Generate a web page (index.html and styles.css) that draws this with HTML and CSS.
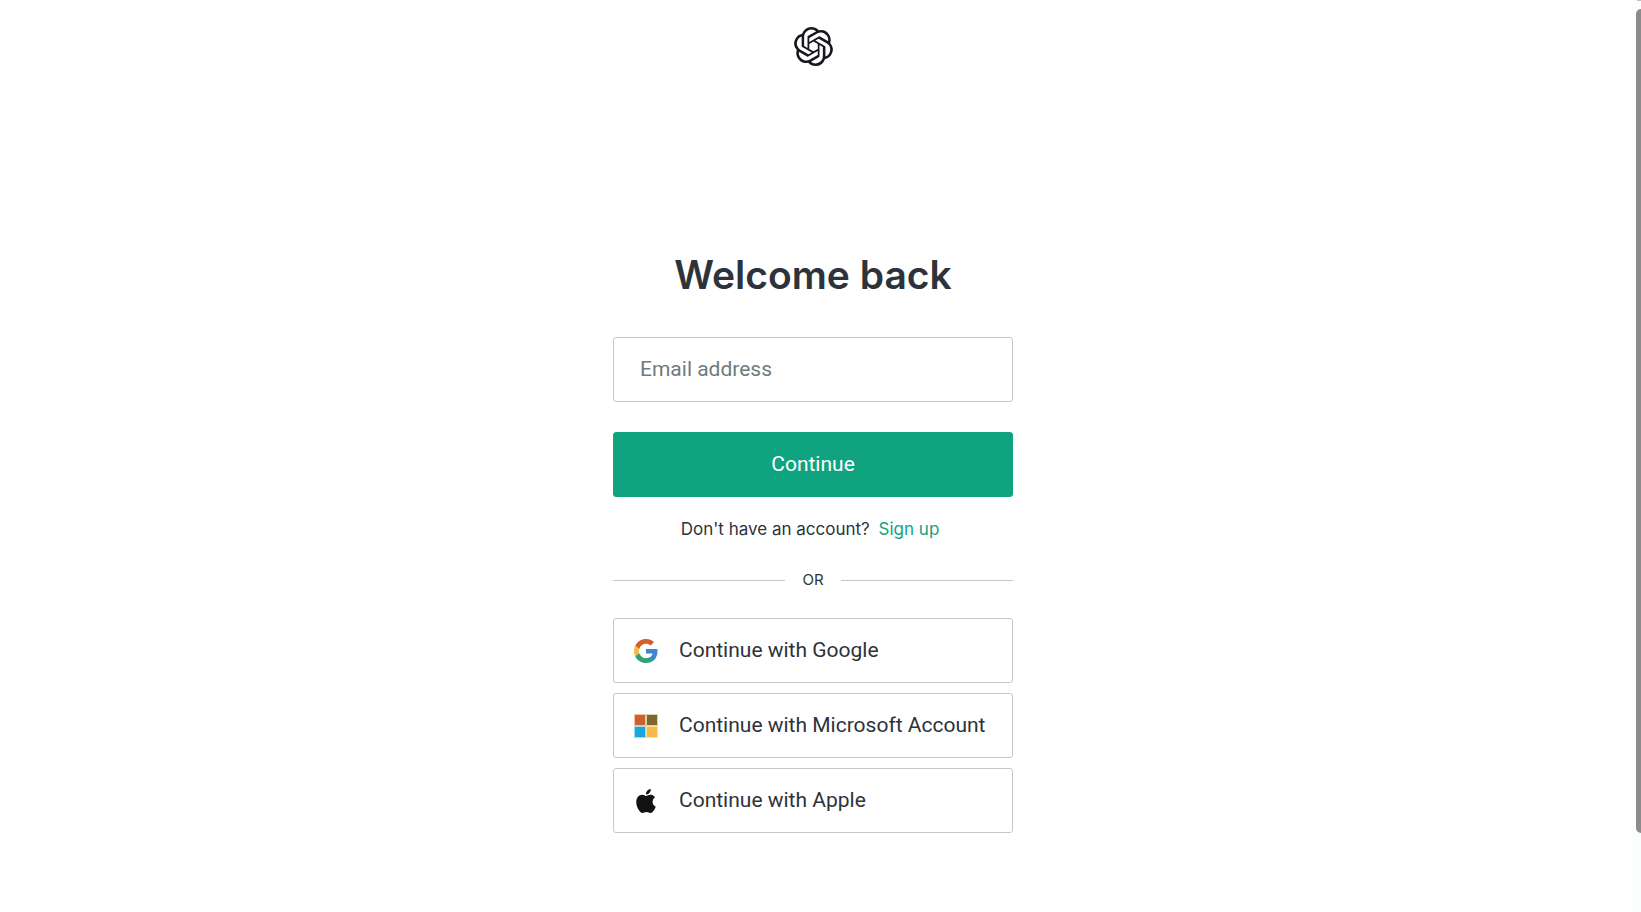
FILE: index.html
```html
<!DOCTYPE html>
<html lang="en">
<head>
<meta charset="utf-8">
<meta name="viewport" content="width=device-width, initial-scale=1">
<title>Welcome back</title>
<link rel="stylesheet" href="styles.css">
</head>
<body>
<div class="page">
  <header class="header">
    <svg class="logo" viewBox="0 0 24 24" role="img" aria-label="OpenAI"><path fill="currentColor" d="M22.2819 9.8211a5.9847 5.9847 0 0 0-.5157-4.9108 6.0462 6.0462 0 0 0-6.5098-2.9A6.0651 6.0651 0 0 0 4.9807 4.1818a5.9847 5.9847 0 0 0-3.9977 2.9 6.0462 6.0462 0 0 0 .7427 7.0966 5.98 5.98 0 0 0 .511 4.9107 6.051 6.051 0 0 0 6.5146 2.9001A5.9847 5.9847 0 0 0 13.2599 24a6.0557 6.0557 0 0 0 5.7718-4.2058 5.9894 5.9894 0 0 0 3.9977-2.9001 6.0557 6.0557 0 0 0-.7475-7.0729zm-9.022 12.6081a4.4755 4.4755 0 0 1-2.8764-1.0408l.1419-.0804 4.7783-2.7582a.7948.7948 0 0 0 .3927-.6813v-6.7369l2.02 1.1686a.071.071 0 0 1 .038.052v5.5826a4.504 4.504 0 0 1-4.4945 4.4944zm-9.6607-4.1254a4.4708 4.4708 0 0 1-.5346-3.0137l.142.0852 4.783 2.7582a.7712.7712 0 0 0 .7806 0l5.8428-3.3685v2.3324a.0804.0804 0 0 1-.0332.0615L9.74 19.9502a4.4992 4.4992 0 0 1-6.1408-1.6464zM2.3408 7.8956a4.485 4.485 0 0 1 2.3655-1.9728V11.6a.7664.7664 0 0 0 .3879.6765l5.8144 3.3543-2.0201 1.1685a.0757.0757 0 0 1-.071 0l-4.8303-2.7865A4.504 4.504 0 0 1 2.3408 7.8956zm16.5963 3.8558L13.1038 8.364 15.1192 7.2a.0757.0757 0 0 1 .071 0l4.8303 2.7913a4.4944 4.4944 0 0 1-.6765 8.1042v-5.6772a.79.79 0 0 0-.407-.667zm2.0107-3.0231l-.142-.0852-4.7735-2.7818a.7759.7759 0 0 0-.7854 0L9.409 9.2297V6.8974a.0662.0662 0 0 1 .0284-.0615l4.8303-2.7866a4.4992 4.4992 0 0 1 6.6802 4.66zM8.3065 12.863l-2.02-1.1638a.0804.0804 0 0 1-.038-.0567V6.0742a4.4992 4.4992 0 0 1 7.3757-3.4537l-.142.0805L8.704 5.459a.7948.7948 0 0 0-.3927.6813zm1.0976-2.3654l2.602-1.4998 2.6069 1.4998v2.9994l-2.5974 1.4997-2.6067-1.4997Z"/></svg>
  </header>
  <main class="panel">
    <h1 class="title">Welcome back</h1>
    <form class="form">
      <input class="field" type="email" name="email" aria-label="Email address" placeholder="Email address">
      <button class="submit" type="submit">Continue</button>
    </form>
    <p class="signup">Don't have an account? <a class="signup-link" href="#signup">Sign up</a></p>
    <div class="divider">OR</div>
    <div class="providers">
      <button class="provider" type="button">
        <svg class="icon" viewBox="0 0 24 24" aria-hidden="true"><path fill="#3f86d9" d="M23.5 12.3c0-.9-.1-1.6-.2-2.3H12v4.5h6.500c-.3 1.5-1.1 2.8-2.4 3.7v3h3.9c2.2-2.1 3.5-5.2 3.5-8.9z"/><path fill="#2ca478" d="M12 24c3.200 0 6-1.100 8-2.900l-3.900-3c-1.100.7-2.500 1.200-4.100 1.200-3.100 0-5.800-2.100-6.700-5H1.300v3.100C3.300 21.300 7.300 24 12 24z"/><path fill="#f6b94a" d="M5.300 14.300c-.3-.7-.4-1.500-.4-2.300s.2-1.600.4-2.300V6.600h-4C.5 8.200 0 10.100 0 12s.5 3.800 1.300 5.400l4-3.100z"/><path fill="#d0602e" d="M12 4.700c1.800 0 3.400.6 4.600 1.800L20 3.100C17.900 1.200 15.200 0 12 0 7.300 0 3.300 2.700 1.300 6.600l4 3.100c.9-2.900 3.600-5 6.700-5z"/></svg>
        <span>Continue with Google</span>
      </button>
      <button class="provider" type="button">
        <svg class="icon" viewBox="0 0 24 24" aria-hidden="true"><path fill="#f3c3a3" d="M0 0h12v12H0z"/><path fill="#d3d5ae" d="M12 0h12v12H12z"/><path fill="#a4dcec" d="M0 12h12v12H0z"/><path fill="#fce0a4" d="M12 12h12v12H12z"/><path fill="#d0602e" d="M1 1h10v10H1z"/><path fill="#80652f" d="M13 1h10v10H13z"/><path fill="#1ca6df" d="M1 13h10v10H1z"/><path fill="#f7b94a" d="M13 13h10v10H13z"/></svg>
        <span>Continue with Microsoft Account</span>
      </button>
      <button class="provider" type="button">
        <svg class="icon" viewBox="0 0 24 24" aria-hidden="true"><path fill="#101214" d="M12.152 6.896c-.948 0-2.415-1.078-3.960-1.040-2.040.027-3.910 1.183-4.961 3.014-2.117 3.675-.546 9.103 1.519 12.090 1.013 1.454 2.208 3.090 3.792 3.039 1.520-.065 2.090-.987 3.935-.987 1.831 0 2.350.987 3.960.948 1.637-.026 2.676-1.480 3.676-2.948 1.156-1.688 1.636-3.325 1.662-3.415-.039-.013-3.182-1.221-3.220-4.857-.026-3.040 2.480-4.494 2.597-4.559-1.429-2.090-3.623-2.324-4.390-2.376-2-.156-3.675 1.090-4.610 1.090zM15.530 3.830c.843-1.012 1.400-2.427 1.245-3.830-1.207.052-2.662.805-3.532 1.818-.780.896-1.454 2.338-1.273 3.714 1.338.104 2.715-.688 3.559-1.701"/></svg>
        <span>Continue with Apple</span>
      </button>
    </div>
  </main>
</div>
<div class="rail" aria-hidden="true"><div class="rail-cap"></div><div class="rail-thumb"></div></div>
</body>
</html>
```
FILE: styles.css
```css
* {
  box-sizing: border-box;
}

body {
  margin: 0;
  min-height: 100vh;
  display: flex;
  background: #fff;
  color: #2d333a;
  font-family: Roboto, "Liberation Sans", sans-serif;
}

.page {
  flex: 1;
  display: flex;
  flex-direction: column;
  align-items: center;
  padding: 27px 0 72px;
}

.logo {
  display: block;
  width: 39px;
  height: 39px;
  color: #16181d;
}

.panel {
  width: 100%;
  max-width: 400px;
  margin-top: 181px;
}

.title,
.signup,
.divider {
  font-family: Inter, "Liberation Sans", sans-serif;
}

.title {
  margin: 0 0 34px;
  font-size: 39px;
  line-height: 56px;
  font-weight: 600;
  text-align: center;
}

.form {
  display: flex;
  flex-direction: column;
  gap: 30px;
}

.field,
.submit,
.provider {
  width: 100%;
  height: 65px;
  border: 1px solid #c2c8d0;
  border-radius: 3px;
  background: #fff;
  color: inherit;
  font-family: inherit;
  font-size: 21px;
  line-height: 24px;
}

.field {
  padding: 0 26px 2px;
}

.field::placeholder {
  color: #6f7b7e;
  opacity: 1;
}

.submit {
  padding: 0 0 2px;
  border-color: #10a37f;
  background: #10a37f;
  color: #fff;
}

.signup {
  margin: 20px 0 0;
  padding-right: 6px;
  font-size: 17px;
  line-height: 24px;
  text-align: center;
}

.signup-link {
  margin-left: 4px;
  color: #10a37f;
  text-decoration: none;
}

.divider {
  display: flex;
  align-items: center;
  gap: 17px;
  margin: 27px 0 26px;
  font-size: 15px;
  line-height: 24px;
}

.divider::before,
.divider::after {
  content: "";
  flex: 1;
  height: 1px;
  background: #c2c8d0;
}

.providers {
  display: flex;
  flex-direction: column;
  gap: 10px;
}

.provider {
  display: flex;
  align-items: center;
  gap: 21px;
  padding: 0 20px;
  text-align: left;
}

.provider span {
  padding-bottom: 2px;
}

.icon {
  flex: none;
  width: 24px;
  height: 24px;
}

.rail {
  width: 15px;
  height: 100vh;
  display: flex;
  flex-direction: column;
  align-items: flex-end;
  gap: 8px;
  background: linear-gradient(to right, #fff 5px, #fcfdfd 5px);
}

.rail-cap {
  width: 4px;
  height: 1px;
  background: #c0c0c0;
}

.rail-thumb {
  width: 5px;
  height: 90.4%;
  border-radius: 5px 0 0 5px;
  background: #8b8b8b;
}
```
